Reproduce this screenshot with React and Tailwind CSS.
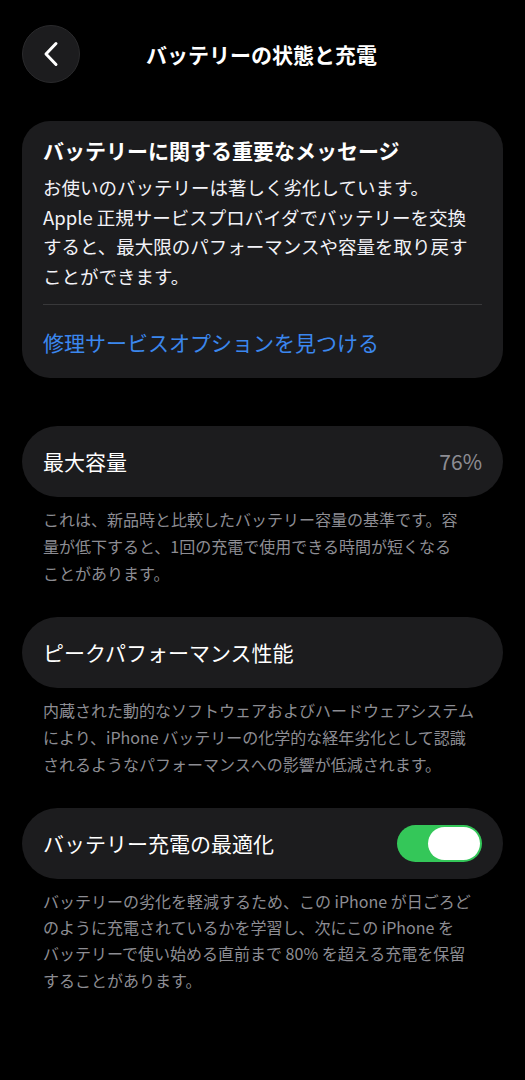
import React from 'react';

const font = { fontFamily: '"Noto Sans CJK JP", "Noto Sans", sans-serif' };

const Lines = ({ lines, className }) => (
    <div className={className}>
        {lines.map((l, i) => (
            <div key={i} className="whitespace-nowrap">{l}</div>
        ))}
    </div>
);

const Note = ({ lines, leading = 'leading-[27px]' }) => (
    <Lines
        lines={lines}
        className={`px-[21px] mt-[9px] text-[16px] ${leading} text-[#8d8d93]`}
    />
);

const Row = ({ children, className = '' }) => (
    <div className={`h-[71px] rounded-full bg-[#1c1c1e] pl-[21px] pr-[21px] flex items-center justify-between ${className}`}>
        {children}
    </div>
);

const App = () => {
    return (
        <div className="min-h-screen bg-black text-white px-[22px] pb-10" style={font}>
            {/* header */}
            <div className="grid grid-cols-[58px_1fr_58px] items-center pt-[25px]">
                <button className="w-[58px] h-[58px] rounded-full bg-[#1c1c1e] border border-[#2a2a2c] flex items-center justify-center">
                    <svg width="16" height="26" viewBox="0 0 16 26" fill="none">
                        <path d="M13 2.5 L3 13 L13 23.5" stroke="white" strokeWidth="3" strokeLinecap="round" strokeLinejoin="round" />
                    </svg>
                </button>
                <h1 className="text-center text-[21px] font-bold leading-[28px] pr-[2px]">バッテリーの状態と充電</h1>
                <div />
            </div>

            {/* important message */}
            <div className="mt-[38px] rounded-[28px] bg-[#1c1c1e] px-[21px] pt-[15px] pb-[22px]">
                <h2 className="text-[21px] font-bold leading-[28px]">バッテリーに関する重要なメッセージ</h2>
                <Lines
                    className="mt-[9px] text-[18.5px] leading-[29.7px] text-[#f2f2f7]"
                    lines={[
                        'お使いのバッテリーは著しく劣化しています。',
                        'Apple 正規サービスプロバイダでバッテリーを交換',
                        'すると、最大限のパフォーマンスや容量を取り戻す',
                        'ことができます。',
                    ]}
                />
                <div className="mt-[12px] h-px bg-[#38383a]" />
                <div className="mt-[23px] text-[21px] leading-[28px] text-[#3b87ee]">修理サービスオプションを見つける</div>
            </div>

            {/* max capacity */}
            <Row className="mt-[48px]">
                <span className="text-[21px]">最大容量</span>
                <span className="text-[21px] text-[#8d8d93]">76%</span>
            </Row>
            <Note
                lines={[
                    'これは、新品時と比較したバッテリー容量の基準です。容',
                    '量が低下すると、1回の充電で使用できる時間が短くなる',
                    'ことがあります。',
                ]}
            />

            {/* peak performance */}
            <Row className="mt-[30px]">
                <span className="text-[21px]">ピークパフォーマンス性能</span>
            </Row>
            <Note
                lines={[
                    '内蔵された動的なソフトウェアおよびハードウェアシステム',
                    'により、iPhone バッテリーの化学的な経年劣化として認識',
                    'されるようなパフォーマンスへの影響が低減されます。',
                ]}
            />

            {/* optimized charging */}
            <Row className="mt-[30px] pr-[20px]">
                <span className="text-[21px]">バッテリー充電の最適化</span>
                <div className="w-[85px] h-[37px] rounded-full bg-[#34c759] flex items-center justify-end p-[2px]">
                    <div className="w-[52px] h-[33px] rounded-full bg-white" />
                </div>
            </Row>
            <Note
                leading="leading-[26.3px]"
                lines={[
                    'バッテリーの劣化を軽減するため、この iPhone が日ごろど',
                    'のように充電されているかを学習し、次にこの iPhone を',
                    'バッテリーで使い始める直前まで 80% を超える充電を保留',
                    'することがあります。',
                ]}
            />
        </div>
    );
};

export default App;
